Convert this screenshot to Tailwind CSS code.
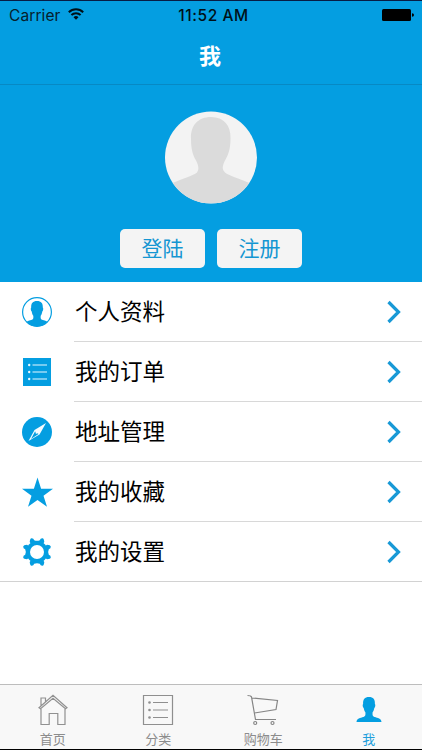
<!DOCTYPE html>
<html lang="zh-CN">
<head>
<meta charset="utf-8">
<meta name="viewport" content="width=device-width, initial-scale=1">
<title>我</title>
<script src="https://cdn.jsdelivr.net/npm/@tailwindcss/browser@4"></script>
</head>
<body class="flex h-[750px] w-[422px] flex-col overflow-hidden border-t border-b border-t-[#071d45] border-b-black bg-white font-['Inter','Noto_Sans_CJK_SC',sans-serif] text-black">
<header class="flex h-[84px] shrink-0 flex-col border-b border-[#0789c4] bg-[#049ee1]">
  <div class="grid h-7 grid-cols-3 items-center pr-2 pl-[9px] text-[#06202c]">
    <div class="flex items-center gap-[7px]">
      <span class="pt-px text-[15.5px] tracking-[0.1px]">Carrier</span>
      <svg class="mb-0.5 h-3 w-4" viewBox="0 0 16 12" fill="none" stroke="#001018" stroke-width="2"><path d="M.8 4.2a10.3 10.3 0 0 1 14.4 0M3.4 7a6.600 6.600 0 0 1 9.2 0"/><path d="M8 11.8 5.5 9.3a3.6 3.6 0 0 1 5 0z" fill="#001018" stroke="none"/></svg>
    </div>
    <span class="pt-px pl-1 text-center text-[15.5px] font-medium tracking-[0.55px] whitespace-nowrap text-[#001018]">11:52 AM</span>
    <svg class="h-3 w-8 justify-self-end" viewBox="0 0 32 12"><rect width="29" height="12" rx="1.5"/><path d="M30 4.2q2 .3 2 1.8t-2 1.8z"/></svg>
  </div>
  <h1 class="flex flex-1 items-center justify-center pr-0.5 pb-0.5 text-[22px] leading-none font-bold text-white">我</h1>
</header>

<section class="flex h-[197px] shrink-0 flex-col items-center bg-[#049ee1] pt-[26px]">
  <svg class="mr-px h-[93px] w-[92px]" viewBox="0 0 92 92">
    <defs><clipPath id="avatar"><circle cx="46" cy="46" r="46"/></clipPath></defs>
    <circle cx="46" cy="46" r="46" fill="#f3f3f3"/>
    <path clip-path="url(#avatar)" fill="#dbdbdb" d="M46 5.500C59 5.500 66 14 65.500 27c0 11-2.500 17-5.500 22-3 6-3 9 0 12 4 3 13 6 26 11v20H6V72c13-5 22-8 26-11 2-3 2-6-1-12-3-5-5-11-5-22C25.500 14 33 5.500 46 5.500z"/>
  </svg>
  <div class="mt-[25px] flex gap-3 text-[21px] text-[#1496d2]">
    <button class="flex h-[39px] w-[85px] items-center justify-center rounded-[5px] bg-[#f4f4f4] leading-none">登陆</button>
    <button class="flex h-[39px] w-[85px] items-center justify-center rounded-[5px] bg-[#f4f4f4] leading-none">注册</button>
  </div>
</section>

<main class="flex-1">
  <ul class="border-b border-[#d2d2d2] text-[22.500px] leading-none">
    <li class="flex h-[60px] items-center pl-[22px]">
      <svg class="h-[30px] w-[30px]" viewBox="0 0 30 30"><defs><clipPath id="person"><circle cx="15" cy="15" r="14.500"/></clipPath></defs><circle cx="15" cy="15" r="14.400" fill="#fff" stroke="#049ee1" stroke-width="1.200"/><path clip-path="url(#person)" fill="#049ee1" d="M15 4c4.200 0 6 2.200 5.800 6.500.8.600.4 3.500-.5 4-.3 2-.8 3.300-1.600 4.300-.2 2.700 0 3.500 1.300 4 2.500.8 4.500 1.200 6.500 2.700L21 30H9l-5.500-4.500c2-1.500 4-1.900 6.500-2.700 1.300-.5 1.500-1.300 1.300-4-.8-1-1.300-2.300-1.600-4.300-.9-.5-1.300-3.400-.5-4C9 6.200 10.800 4 15 4z"/></svg>
      <div class="ml-[22px] flex h-full flex-1 items-center justify-between border-b border-[#d8d8d8] pr-5"><span class="pt-0.5 pl-px">个人资料</span><svg class="h-6 w-4" viewBox="0 0 16 24" fill="none" stroke="#1899d6" stroke-width="3.200"><path d="m2.500 2 10 10-10 10"/></svg></div>
    </li>
    <li class="flex h-[60px] items-center pl-[22px]">
      <svg class="h-[30px] w-[30px]" viewBox="0 0 30 30"><path fill="#049ee1" d="M1 1h28v28H1z"/><path stroke="#e8f8ff" stroke-width="1.200" d="M10.500 8H25M10.500 15H25M10.500 22H25"/><g fill="#e8f8ff"><circle cx="7.200" cy="8" r="1.200"/><circle cx="7.200" cy="15" r="1.200"/><circle cx="7.200" cy="22" r="1.200"/></g></svg>
      <div class="ml-[22px] flex h-full flex-1 items-center justify-between border-b border-[#d8d8d8] pr-5"><span class="pt-0.5 pl-px">我的订单</span><svg class="h-6 w-4" viewBox="0 0 16 24" fill="none" stroke="#1899d6" stroke-width="3.200"><path d="m2.500 2 10 10-10 10"/></svg></div>
    </li>
    <li class="flex h-[60px] items-center pl-[22px]">
      <svg class="h-[30px] w-[30px]" viewBox="0 0 30 30"><circle cx="15" cy="15" r="15" fill="#049ee1"/><path fill="#f4fbff" d="M24 6 17.500 17.500 6.500 24l6-11z"/><path fill="#049ee1" d="m13 14.500 3.500 2.500-7.500 5z"/><circle cx="14.500" cy="15.700" r="1" fill="#f4fbff"/></svg>
      <div class="ml-[22px] flex h-full flex-1 items-center justify-between border-b border-[#d8d8d8] pr-5"><span class="pt-0.5 pl-px">地址管理</span><svg class="h-6 w-4" viewBox="0 0 16 24" fill="none" stroke="#1899d6" stroke-width="3.200"><path d="m2.500 2 10 10-10 10"/></svg></div>
    </li>
    <li class="flex h-[60px] items-center pl-[22px]">
      <svg class="h-[30px] w-[30px] overflow-visible" viewBox="0 0 30 30"><path fill="#049ee1" d="m15.500.500 3.600 11.200H31l-9.500 7 3.500 11.100-9.500-6.800L6 29.800l3.500-11.100-9.500-7h11.900z"/></svg>
      <div class="ml-[22px] flex h-full flex-1 items-center justify-between border-b border-[#d8d8d8] pr-5"><span class="pt-0.5 pl-px">我的收藏</span><svg class="h-6 w-4" viewBox="0 0 16 24" fill="none" stroke="#1899d6" stroke-width="3.200"><path d="m2.500 2 10 10-10 10"/></svg></div>
    </li>
    <li class="flex h-[59px] items-center pl-[22px]">
      <svg class="h-[30px] w-[30px]" viewBox="-15 -15 30 30"><g fill="#049ee1"><path id="teeth" d="M-7.300-10 Q-7-13.500-5.500-13.800 Q-3.500-14-2.800-11.800 Q0-10.500 2.800-11.800 Q3.500-14 5.500-13.800 Q7-13.500 7.300-10 L0 0z"/><use href="#teeth" transform="rotate(90)"/><use href="#teeth" transform="rotate(180)"/><use href="#teeth" transform="rotate(270)"/><circle r="11"/></g><circle r="7" fill="#fff"/></svg>
      <div class="ml-[22px] flex h-full flex-1 items-center justify-between pr-5"><span class="pt-0.5 pl-px">我的设置</span><svg class="h-6 w-4" viewBox="0 0 16 24" fill="none" stroke="#1899d6" stroke-width="3.200"><path d="m2.500 2 10 10-10 10"/></svg></div>
    </li>
  </ul>
</main>

<nav class="grid h-[65px] shrink-0 grid-cols-4 border-t border-[#bdbdbd] bg-[#f8f8f8] text-[13px] leading-none text-[#8c8c8c]">
  <a class="flex flex-col items-center pt-[9px]">
    <svg class="h-8 w-8" viewBox="0 0 32 32" fill="none" stroke="#919191" stroke-width="1.200"><path d="M4 15v15.500h8.200v-11h8.600v11H28V15"/><path d="M2 13.800 16 1.300l14 12.500-1.500 1L16 4.300 3.500 14.800zM4 11.500V4h4.500v3.500"/></svg>
    <span class="mt-[7px]">首页</span>
  </a>
  <a class="flex flex-col items-center pt-[9px]">
    <svg class="h-8 w-8" viewBox="0 0 32 32" fill="none" stroke="#8f8f8f" stroke-width="1.200"><path d="M1.500 1.500h29v29h-29zM11 8.500h15M11 16h15M11 23.500h15"/><g fill="#8f8f8f" stroke="none"><circle cx="7.500" cy="8.500" r="1.300"/><circle cx="7.500" cy="16" r="1.300"/><circle cx="7.500" cy="23.500" r="1.300"/></g></svg>
    <span class="mt-[7px]">分类</span>
  </a>
  <a class="flex flex-col items-center pt-[9px] pr-px">
    <svg class="h-8 w-8" viewBox="0 0 32 32" fill="none" stroke="#858585" stroke-width="1.200"><path d="M.5 1.500q3.500 0 4 1.500l4 22.500H29M5 4l25.500 2.500-1.500 9L7.500 19"/><circle cx="8.200" cy="29" r="1.500"/><circle cx="25.500" cy="29" r="1.500"/></svg>
    <span class="mt-[7px]">购物车</span>
  </a>
  <a class="flex flex-col items-center pt-[9px] pr-px text-[#1f9fdc]">
    <svg class="h-8 w-8" viewBox="0 0 32 32"><path fill="#049ee1" d="M16 3c4.300 0 6.200 2.200 5.900 7 .8.600.4 3.500-.6 4-.3 2-.9 3.300-1.700 4.300-.2 3.200 0 4 2 4.700 3 1 6.700 1.300 6.900 5H3.500c.2-3.700 3.900-4 6.900-5 2-.7 2.200-1.500 2-4.700-.8-1-1.400-2.300-1.700-4.300-1-.5-1.400-3.400-.6-4C9.800 5.200 11.700 3 16 3z"/></svg>
    <span class="mt-[7px]">我</span>
  </a>
</nav>
</body>
</html>
